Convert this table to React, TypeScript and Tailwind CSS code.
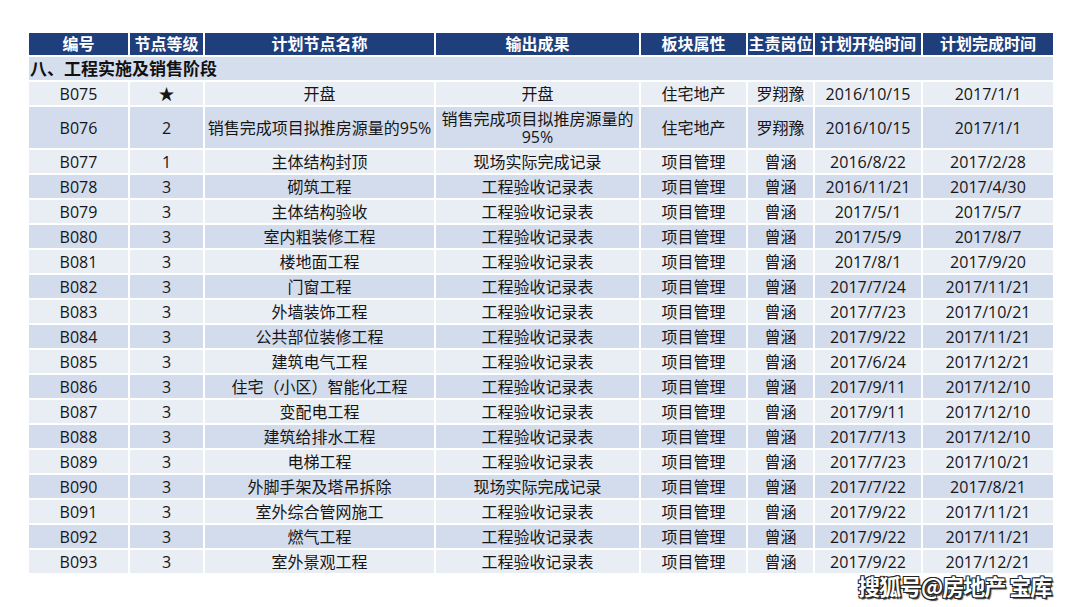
import type { ReactNode } from 'react'

type Row = {
  code: string
  level: string
  name: string
  output: ReactNode
  sector: string
  owner: string
  start: string
  end: string
}

const headers = ['编号', '节点等级', '计划节点名称', '输出成果', '板块属性', '主责岗位', '计划开始时间', '计划完成时间']

const check = '工程验收记录表'
const site = '现场实际完成记录'

const rows: Row[] = [
  { code: 'B075', level: '★', name: '开盘', output: '开盘', sector: '住宅地产', owner: '罗翔豫', start: '2016/10/15', end: '2017/1/1' },
  {
    code: 'B076',
    level: '2',
    name: '销售完成项目拟推房源量的95%',
    output: (
      <div className="flex flex-col items-center">
        <span className="leading-[18px]">销售完成项目拟推房源量的</span>
        <span className="leading-[18px]">95%</span>
      </div>
    ),
    sector: '住宅地产',
    owner: '罗翔豫',
    start: '2016/10/15',
    end: '2017/1/1',
  },
  { code: 'B077', level: '1', name: '主体结构封顶', output: site, sector: '项目管理', owner: '曾涵', start: '2016/8/22', end: '2017/2/28' },
  { code: 'B078', level: '3', name: '砌筑工程', output: check, sector: '项目管理', owner: '曾涵', start: '2016/11/21', end: '2017/4/30' },
  { code: 'B079', level: '3', name: '主体结构验收', output: check, sector: '项目管理', owner: '曾涵', start: '2017/5/1', end: '2017/5/7' },
  { code: 'B080', level: '3', name: '室内粗装修工程', output: check, sector: '项目管理', owner: '曾涵', start: '2017/5/9', end: '2017/8/7' },
  { code: 'B081', level: '3', name: '楼地面工程', output: check, sector: '项目管理', owner: '曾涵', start: '2017/8/1', end: '2017/9/20' },
  { code: 'B082', level: '3', name: '门窗工程', output: check, sector: '项目管理', owner: '曾涵', start: '2017/7/24', end: '2017/11/21' },
  { code: 'B083', level: '3', name: '外墙装饰工程', output: check, sector: '项目管理', owner: '曾涵', start: '2017/7/23', end: '2017/10/21' },
  { code: 'B084', level: '3', name: '公共部位装修工程', output: check, sector: '项目管理', owner: '曾涵', start: '2017/9/22', end: '2017/11/21' },
  { code: 'B085', level: '3', name: '建筑电气工程', output: check, sector: '项目管理', owner: '曾涵', start: '2017/6/24', end: '2017/12/21' },
  { code: 'B086', level: '3', name: '住宅（小区）智能化工程', output: check, sector: '项目管理', owner: '曾涵', start: '2017/9/11', end: '2017/12/10' },
  { code: 'B087', level: '3', name: '变配电工程', output: check, sector: '项目管理', owner: '曾涵', start: '2017/9/11', end: '2017/12/10' },
  { code: 'B088', level: '3', name: '建筑给排水工程', output: check, sector: '项目管理', owner: '曾涵', start: '2017/7/13', end: '2017/12/10' },
  { code: 'B089', level: '3', name: '电梯工程', output: check, sector: '项目管理', owner: '曾涵', start: '2017/7/23', end: '2017/10/21' },
  { code: 'B090', level: '3', name: '外脚手架及塔吊拆除', output: site, sector: '项目管理', owner: '曾涵', start: '2017/7/22', end: '2017/8/21' },
  { code: 'B091', level: '3', name: '室外综合管网施工', output: check, sector: '项目管理', owner: '曾涵', start: '2017/9/22', end: '2017/11/21' },
  { code: 'B092', level: '3', name: '燃气工程', output: check, sector: '项目管理', owner: '曾涵', start: '2017/9/22', end: '2017/11/21' },
  { code: 'B093', level: '3', name: '室外景观工程', output: check, sector: '项目管理', owner: '曾涵', start: '2017/9/22', end: '2017/12/21' },
]

const font = { fontFamily: '"Open Sans", "Noto Sans CJK SC", sans-serif' }

export default function App() {
  return (
    <div className="relative h-[607px] w-[1080px] overflow-hidden bg-white text-[16px] text-[#161616]" style={font}>
      <div className="pl-[29px] pt-[33px]">
        <div className="grid w-[1024px] grid-cols-[99px_73px_229px_203px_105px_65px_106px_130px] gap-[2px]">
          {headers.map((h) => (
            <div
              key={h}
              className="flex h-[22px] items-center justify-center bg-[#1f3e7c] text-[16px] font-bold text-white"
            >
              {h}
            </div>
          ))}

          <div className="col-span-8 flex h-[23px] items-center bg-[#d5deed] pl-[1px] text-[17px] font-bold text-[#111]">
            八、工程实施及销售阶段
          </div>

          {rows.map((row, i) => {
            const bg = i % 2 === 0 ? 'bg-[#e9edf4]' : 'bg-[#d3dcec]'
            const tall = row.code === 'B076'
            const cells: ReactNode[] = [
              row.code,
              row.level,
              row.name,
              row.output,
              row.sector,
              row.owner,
              row.start,
              row.end,
            ]
            return cells.map((c, j) => (
              <div
                key={row.code + j}
                className={`flex items-center justify-center whitespace-nowrap text-center leading-[20px] ${bg} ${tall ? 'h-[41px]' : 'h-[23px]'}`}
              >
                {c}
              </div>
            ))
          })}
        </div>
      </div>

      <div
        className="absolute left-[858px] top-[574px] text-[22px] font-bold leading-[22px] tracking-[-1px] text-white"
        style={{
          fontFamily: '"Noto Sans CJK SC", sans-serif',
          textShadow:
            '1px 1px 0 #222, -1px -1px 0 #222, 1px -1px 0 #222, -1px 1px 0 #222, 2px 2px 1px #444',
        }}
      >
        搜狐号@房地产 宝库
      </div>
    </div>
  )
}
